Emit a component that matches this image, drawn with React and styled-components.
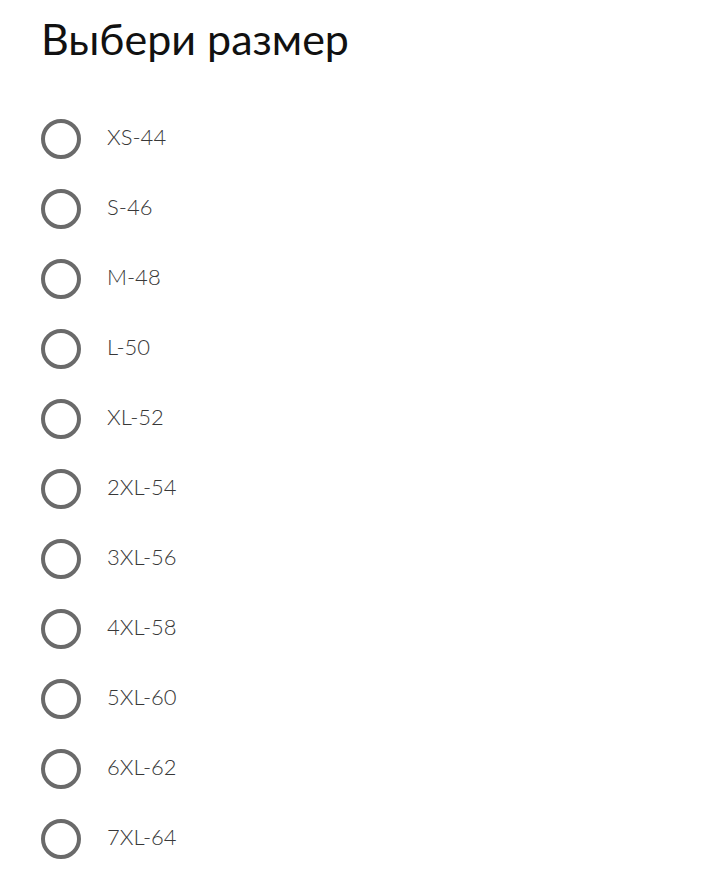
import React, { useState } from 'react'
import styled, { createGlobalStyle } from 'styled-components'

const sizes = ['XS-44', 'S-46', 'M-48', 'L-50', 'XL-52', '2XL-54', '3XL-56', '4XL-58', '5XL-60', '6XL-62', '7XL-64']

const GlobalStyle = createGlobalStyle`
  body {
    margin: 0;
    background: #fff;
    font-family: Lato, "Noto Sans", sans-serif;
  }
`

const Page = styled.div`
  padding: 13px 0 0 41px;
`

const Title = styled.h1`
  margin: 0 0 39px;
  font-size: 43px;
  line-height: 52px;
  font-weight: 400;
  color: #111;
`

const List = styled.div`
  display: flex;
  flex-direction: column;
`

const Row = styled.label`
  display: flex;
  align-items: center;
  height: 70px;
  gap: 26px;
  cursor: pointer;
`

const Radio = styled.span`
  box-sizing: border-box;
  width: 40px;
  height: 40px;
  border-radius: 50%;
  border: 4px solid #6a6a6a;
  display: flex;
  align-items: center;
  justify-content: center;
  &::after {
    content: '';
    width: 18px;
    height: 18px;
    border-radius: 50%;
    background: ${p => (p.$checked ? '#6a6a6a' : 'transparent')};
  }
`

const Label = styled.span`
  font-size: 22px;
  font-weight: 300;
  color: #383838;
  margin-top: -6px;
`

export default function App() {
  const [picked, setPicked] = useState(null)
  return (
    <Page>
      <GlobalStyle />
      <Title>Выбери размер</Title>
      <List>
        {sizes.map(s => (
          <Row key={s} onClick={() => setPicked(s)}>
            <Radio $checked={picked === s} />
            <Label>{s}</Label>
          </Row>
        ))}
      </List>
    </Page>
  )
}
